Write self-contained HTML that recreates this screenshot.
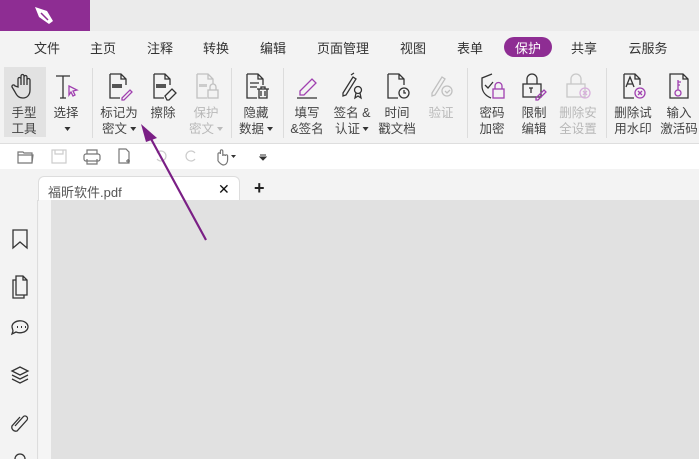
<!DOCTYPE html>
<html><head><meta charset="utf-8"><style>
*{margin:0;padding:0;box-sizing:border-box}
body{width:699px;height:459px;overflow:hidden;background:#f3f3f3;font-family:"Liberation Sans","Noto Sans CJK SC",sans-serif;position:relative;color:#333}
.a{position:absolute}
.m{position:absolute;top:38px;font-size:13px;color:#333;transform:translateX(-50%);white-space:nowrap}
.b{position:absolute;top:106px;font-size:12.5px;line-height:15.5px;text-align:center;transform:translateX(-50%);white-space:nowrap;color:#444}
.g{color:#b8b8b8}
.ic{position:absolute;top:71px;width:30px;height:30px;transform:translateX(-50%)}
.sep{position:absolute;top:68px;width:1px;height:70px;background:#dcdcdc}
.tri{display:inline-block;border-left:3px solid transparent;border-right:3px solid transparent;border-top:4px solid #333;vertical-align:middle;margin-left:3px}
</style></head><body>
<div class="a" style="left:0;top:0;width:699px;height:31px;background:#ebebeb"></div>
<div class="a" style="left:0;top:0;width:90px;height:31px;background:#8e2d93"></div>
<svg class="a" style="left:33px;top:5px" width="24" height="22" viewBox="0 0 24 22"><path d="M2 2 L14 6 L20 16 L16 19 L6 12 Z" fill="#fff"/><path d="M8 8 L15 15" stroke="#8e2d93" stroke-width="1.5"/></svg>

<div class="m" style="left:47px">文件</div>
<div class="m" style="left:103px">主页</div>
<div class="m" style="left:160px">注释</div>
<div class="m" style="left:216px">转换</div>
<div class="m" style="left:273px">编辑</div>
<div class="m" style="left:343px">页面管理</div>
<div class="m" style="left:413px">视图</div>
<div class="m" style="left:470px">表单</div>
<div class="a" style="left:504px;top:37px;width:48px;height:20px;border-radius:10px;background:#8e2d93"></div>
<div class="m" style="left:528px;color:#fff">保护</div>
<div class="m" style="left:584px">共享</div>
<div class="m" style="left:648px">云服务</div>

<div class="a" style="left:4px;top:67px;width:42px;height:70px;background:#e2e2e2"></div>
<div class="sep" style="left:92px"></div><div class="sep" style="left:231px"></div><div class="sep" style="left:283px"></div><div class="sep" style="left:467px"></div><div class="sep" style="left:606px"></div>

<svg class="ic" style="left:24px" viewBox="0 0 30 30" fill="none" stroke="#333" stroke-width="1.3"><path d="M9 16V8a1.5 1.5 0 0 1 3 0v6V5a1.5 1.5 0 0 1 3 0v9V6a1.5 1.5 0 0 1 3 0v8V9a1.5 1.5 0 0 1 3 0v10c0 5-3 8-7 8s-6-2-8-6l-3-5a1.5 1.5 0 0 1 3-1z"/></svg>
<svg class="ic" style="left:66px" viewBox="0 0 30 30" fill="none" stroke="#333" stroke-width="1.3"><path d="M5 5h14M12 5v22M9 27h6"/><path d="M18 15l8 4-4 1 2 4-2 1-2-4-2 3z" stroke="#a040b0"/></svg>
<svg class="ic" style="left:119px" viewBox="0 0 30 30" fill="none" stroke="#333" stroke-width="1.3"><path d="M6 3h11l5 5v6M17 3v5h5M6 3v24h10"/><rect x="8" y="13" width="10" height="4" fill="#555" stroke="none"/><path d="M18 27l8-8 2 2-8 8h-2z" stroke="#a040b0"/></svg>
<svg class="ic" style="left:163px" viewBox="0 0 30 30" fill="none" stroke="#333" stroke-width="1.3"><path d="M6 3h11l5 5v6M17 3v5h5M6 3v24h10"/><rect x="8" y="13" width="10" height="4" fill="#555" stroke="none"/><path d="M17 25l7-7 4 4-7 7h-2z"/></svg>
<svg class="ic" style="left:206px" viewBox="0 0 30 30" fill="none" stroke="#c0c0c0" stroke-width="1.3"><path d="M6 3h11l5 5v5M17 3v5h5M6 3v24h10"/><rect x="8" y="13" width="8" height="3" fill="#ccc" stroke="none"/><rect x="17" y="19" width="10" height="8"/><path d="M19 19v-3a3 3 0 0 1 6 0v3"/></svg>
<svg class="ic" style="left:256px" viewBox="0 0 30 30" fill="none" stroke="#333" stroke-width="1.3"><path d="M6 3h11l5 5v6M17 3v5h5M6 3v24h10M9 12h9M9 16h7"/><path d="M16 18h12M18 18v9h8v-9M20 20v5M24 20v5M20 18v-2h4v2"/></svg>
<svg class="ic" style="left:307px" viewBox="0 0 30 30" fill="none" stroke-width="1.3"><path d="M8 20l12-12 4 4-12 12H8z" stroke="#a040b0"/><path d="M5 27h20" stroke="#333"/></svg>
<svg class="ic" style="left:352px" viewBox="0 0 30 30" fill="none" stroke="#333" stroke-width="1.3"><path d="M6 22l10-16 3 2-10 16-3 1z M14 4l3-2"/><circle cx="21" cy="19" r="3.5"/><path d="M19 22l-1 5 3-2 3 2-1-5"/></svg>
<svg class="ic" style="left:397px" viewBox="0 0 30 30" fill="none" stroke="#333" stroke-width="1.3"><path d="M6 3h11l5 5v6M17 3v5h5M6 3v24h10"/><circle cx="22" cy="22" r="5"/><path d="M22 19v3h2"/></svg>
<svg class="ic" style="left:441px" viewBox="0 0 30 30" fill="none" stroke="#c0c0c0" stroke-width="1.3"><path d="M6 22l10-16 3 2-10 16-3 1z"/><circle cx="21" cy="20" r="5"/><path d="M19 20l2 2 3-3"/></svg>
<svg class="ic" style="left:492px" viewBox="0 0 30 30" fill="none" stroke="#333" stroke-width="1.3"><path d="M15 3l-10 4v8c0 6 4 10 9 12M8 14l3 3 5-6"/><rect x="16" y="18" width="11" height="9" stroke="#a040b0"/><path d="M18 18v-3a3.5 3.5 0 0 1 7 0v3" stroke="#a040b0"/></svg>
<svg class="ic" style="left:534px" viewBox="0 0 30 30" fill="none" stroke="#333" stroke-width="1.3"><rect x="4" y="13" width="18" height="13"/><path d="M8 13V8a5 5 0 0 1 10 0v5M10 17h4M12 17v5"/><path d="M17 27l8-8 2 2-8 8h-2z" stroke="#a040b0"/></svg>
<svg class="ic" style="left:578px" viewBox="0 0 30 30" fill="none" stroke="#c8c8c8" stroke-width="1.3"><rect x="4" y="13" width="18" height="13"/><path d="M8 13V8a5 5 0 0 1 10 0v5"/><circle cx="22" cy="22" r="5" stroke="#d8b0dc"/><path d="M20 20l4 4M24 20l-4 4" stroke="#d8b0dc"/></svg>
<svg class="ic" style="left:633px" viewBox="0 0 30 30" fill="none" stroke="#333" stroke-width="1.3"><path d="M6 3h11l5 5v6M17 3v5h5M6 3v24h10M8 16l4-10 4 10M9 13h6"/><circle cx="22" cy="22" r="5" stroke="#a040b0"/><path d="M20 20l4 4M24 20l-4 4" stroke="#a040b0"/></svg>
<svg class="ic" style="left:679px" viewBox="0 0 30 30" fill="none" stroke="#333" stroke-width="1.3"><path d="M6 3h13l5 5v19H6zM19 3v5h5"/><circle cx="14" cy="22" r="3" stroke="#a040b0"/><path d="M14 19V9M14 11h3M14 14h2" stroke="#a040b0"/></svg>

<div class="b" style="left:24px">手型<br>工具</div>
<div class="b" style="left:66px">选择<br><span class="tri"></span></div>
<div class="b" style="left:119px">标记为<br>密文<span class="tri"></span></div>
<div class="b" style="left:163px">擦除</div>
<div class="b g" style="left:206px">保护<br>密文<span class="tri" style="border-top-color:#bbb"></span></div>
<div class="b" style="left:256px">隐藏<br>数据<span class="tri"></span></div>
<div class="b" style="left:307px">填写<br>&amp;签名</div>
<div class="b" style="left:352px">签名 &amp;<br>认证<span class="tri"></span></div>
<div class="b" style="left:397px">时间<br>戳文档</div>
<div class="b g" style="left:441px">验证</div>
<div class="b" style="left:492px">密码<br>加密</div>
<div class="b" style="left:534px">限制<br>编辑</div>
<div class="b g" style="left:578px">删除安<br>全设置</div>
<div class="b" style="left:633px">删除试<br>用水印</div>
<div class="b" style="left:679px">输入<br>激活码</div>

<div class="a" style="left:0;top:143px;width:699px;height:1px;background:#dedede"></div>
<div class="a" style="left:0;top:144px;width:699px;height:25px;background:#fff"></div>
<svg class="a" style="left:0;top:144px" width="280" height="25" viewBox="0 0 280 25" fill="none" stroke="#777" stroke-width="1.2">
<path d="M18 8h5l1 1h8v10H18zM18 11h15l-1 8"/>
<rect x="52" y="6" width="14" height="13" stroke="#ccc"/><path d="M55 6v4h8V6" stroke="#ccc"/>
<rect x="84" y="10" width="16" height="7" rx="2"/><path d="M87 10V6h10v4M87 15v5h10v-5"/>
<path d="M119 5h7l3 3v11h-10zM126 17h4M128 15v4"/>
<path d="M157 9a5 5 0 1 1 0 6" stroke="#ccc"/><path d="M195 9a5 5 0 1 0 0 6" stroke="#ccc"/>
<path d="M218 17v-7a1.2 1.2 0 0 1 2.4 0v-3a1.2 1.2 0 0 1 2.4 0v5a1.2 1.2 0 0 1 2.4 0 1.2 1.2 0 0 1 2.4 0v4c0 3-2 5-4 5s-4-2-5.6-4"/>
<path d="M231 11h5l-2.5 3z" fill="#333" stroke="none"/>
<path d="M260 11h6M260 13h6l-3 3z" fill="#333" stroke="#333" stroke-width="1"/>
</svg>

<div class="a" style="left:0;top:169px;width:699px;height:31px;background:#f3f3f3"></div>
<div class="a" style="left:38px;top:176px;width:202px;height:25px;background:#fff;border:1px solid #ddd;border-bottom:none;border-radius:6px 6px 0 0"></div>
<div class="a" style="left:48px;top:182px;font-size:13px;color:#555">福昕软件.pdf</div>
<div class="a" style="left:218px;top:181px;font-size:14px;color:#111">✕</div>
<div class="a" style="left:254px;top:178px;font-size:18px;color:#222;font-weight:bold">+</div>

<div class="a" style="left:0;top:200px;width:38px;height:259px;background:#f3f3f3;border-right:1px solid #ddd"></div>
<div class="a" style="left:39px;top:200px;width:12px;height:259px;background:#f5f5f5"></div>
<div class="a" style="left:51px;top:200px;width:648px;height:259px;background:#e1e1e1"></div>
<svg class="a" style="left:0;top:200px" width="38" height="259" viewBox="0 0 38 259" fill="none" stroke="#333" stroke-width="1.3">
<path d="M13 30h14v18l-7-6-7 6z"/>
<path d="M16 76h7l4 4v15H16zM23 76v4h4M16 80h-3v18h11v-3"/>
<path d="M12 127a8 6 0 1 1 4 5l-4 2 1-3z"/><path d="M17 127h1M21 127h1M25 127h1" stroke-width="2"/>
<path d="M12 171l8-4 8 4-8 4zM12 175l8 4 8-4M12 179l8 4 8-4"/>
<path d="M15 226l8-9a2.5 2.5 0 0 1 4 3l-10 11a4 4 0 0 1-5-5l8-9"/>
<circle cx="20" cy="259" r="5"/>
</svg>

<svg class="a" style="left:0;top:0;pointer-events:none" width="699" height="459"><line x1="206" y1="240" x2="150" y2="137" stroke="#7a1f85" stroke-width="2.2"/><path d="M141 124 L157 138 L146 142 Z" fill="#7a1f85"/></svg>
</body></html>
